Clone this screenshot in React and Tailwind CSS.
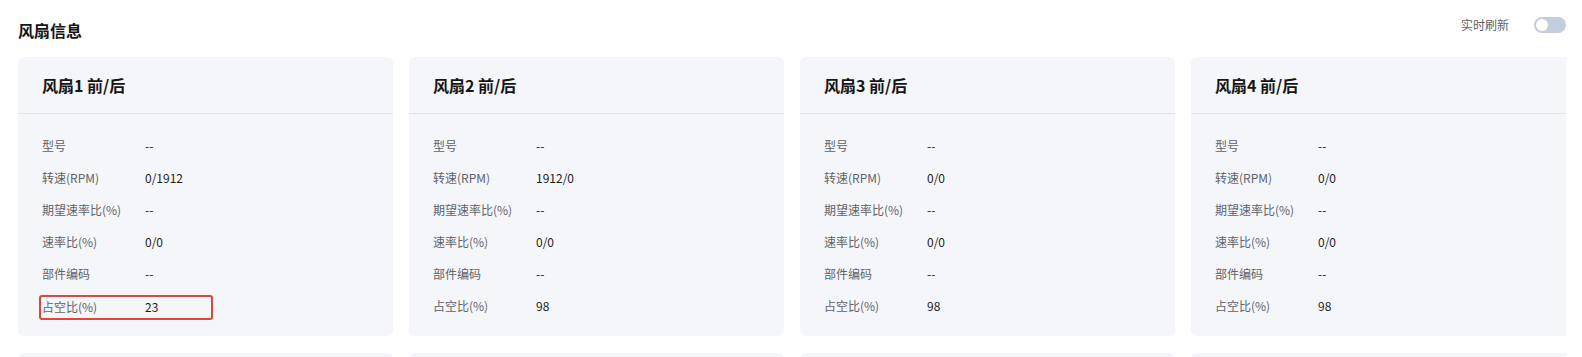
const fans = [
  { name: '风扇1 前/后', rpm: '0/1912', rate: '0/0', duty: '23', highlight: true },
  { name: '风扇2 前/后', rpm: '1912/0', rate: '0/0', duty: '98' },
  { name: '风扇3 前/后', rpm: '0/0', rate: '0/0', duty: '98' },
  { name: '风扇4 前/后', rpm: '0/0', rate: '0/0', duty: '98' },
];

const Row = ({ label, value }) => (
  <div className="flex h-8 items-center">
    <span className="w-[103px] text-[#5f6268]">{label}</span>
    <span className="text-[#1d1d1f]">{value}</span>
  </div>
);

const FanCard = ({ fan, last }) => (
  <div
    className={`w-[375px] shrink-0 bg-[#f5f6f9] ${last ? 'rounded-l-[6px]' : 'rounded-[6px]'}`}
  >
    <div className="flex h-[57px] items-center border-b border-[#e1e4ec] px-6">
      <h3 className="text-[16px] font-bold text-[#151515]">{fan.name}</h3>
    </div>
    <div className="px-6 pt-[16px] pb-[14px] text-[12px]">
      <Row label="型号" value="--" />
      <Row label="转速(RPM)" value={fan.rpm} />
      <Row label="期望速率比(%)" value="--" />
      <Row label="速率比(%)" value={fan.rate} />
      <Row label="部件编码" value="--" />
      {fan.highlight ? (
        <div className="flex h-8 items-center">
          <div className="-ml-[3px] mt-[2px] flex h-[25px] w-[174px] items-center rounded-[3px] border-2 border-[#e5443a] pl-[1px]">
            <span className="w-[103px] text-[#5f6268]">占空比(%)</span>
            <span className="text-[#1d1d1f]">{fan.duty}</span>
          </div>
        </div>
      ) : (
        <Row label="占空比(%)" value={fan.duty} />
      )}
    </div>
  </div>
);

const App = () => {
  return (
    <div
      className="min-h-screen bg-white px-[18px] pr-4"
      style={{ fontFamily: '"Noto Sans CJK SC", "Noto Sans", sans-serif' }}
    >
      {/* 标题栏 */}
      <div className="flex h-[57px] items-start justify-between">
        <h2 className="mt-[18px] text-[16px] font-bold leading-6 text-[#151515]">风扇信息</h2>
        <div className="mt-[16px] flex items-center gap-[25px]">
          <span className="text-[12px] text-[#5c5f66]">实时刷新</span>
          <button className="flex h-4 w-8 items-center rounded-full bg-[#c3cddd] p-[2px]">
            <span className="h-3 w-3 rounded-full bg-white" />
          </button>
        </div>
      </div>

      {/* 风扇卡片 */}
      <div className="overflow-hidden">
        <div className="flex gap-[16px]">
          {fans.map((fan, i) => (
            <FanCard key={fan.name} fan={fan} last={i === fans.length - 1} />
          ))}
        </div>
        <div className="mt-[17px] flex gap-[16px]">
          {fans.map((fan, i) => (
            <div
              key={i}
              className={`h-10 w-[375px] shrink-0 bg-[#f5f6f9] ${i === 3 ? 'rounded-l-[6px]' : 'rounded-[6px]'}`}
            />
          ))}
        </div>
      </div>
    </div>
  );
};

export default App;
